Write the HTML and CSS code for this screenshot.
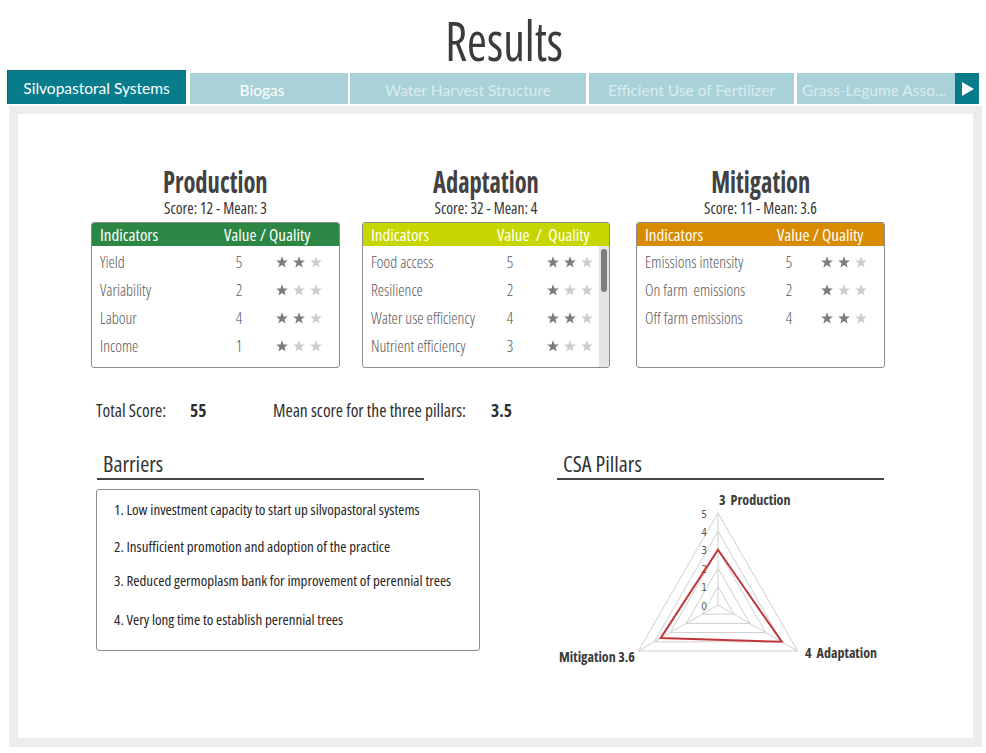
FILE: index.html
```html
<!DOCTYPE html>
<html lang="en">
<head>
<meta charset="utf-8">
<title>Results</title>
<link rel="stylesheet" href="styles.css">
</head>
<body>
<svg class="defs" width="0" height="0" aria-hidden="true">
  <defs>
    <symbol id="star" viewBox="0 0 12 12">
      <polygon points="6,0.3 7.53,4.4 11.9,4.58 8.47,7.3 9.65,11.52 6,9.1 2.35,11.52 3.53,7.3 0.1,4.58 4.47,4.4"/>
    </symbol>
  </defs>
</svg>

<h1 class="title"><span class="title-text">Results</span></h1>

<nav class="tabs">
  <div class="tab tab--active">Silvopastoral Systems</div>
  <div class="tab tab--biogas tab--hover">Biogas</div>
  <div class="tab tab--water">Water Harvest Structure</div>
  <div class="tab tab--fert">Efficient Use of Fertilizer</div>
  <div class="tab tab--grass">Grass-Legume Asso...</div>
  <div class="tab-arrow">
    <svg width="12" height="14" viewBox="0 0 12 14"><polygon points="0,0 12,7 0,14" fill="#fff"/></svg>
  </div>
</nav>

<div class="panel">
  <div class="sheet">

    <div class="pillars">
      <section class="pillar">
        <h2 class="pillar-title"><span>Production</span></h2>
        <p class="pillar-score">Score: 12 - Mean: 3</p>
        <div class="card">
          <div class="card-head card-head--prod">
            <span>Indicators</span><span class="vq">Value / Quality</span>
          </div>
          <div class="card-body">
            <div class="rows">
              <div class="row"><span class="lbl">Yield</span><span class="val">5</span><span class="stars"><svg class="on"><use href="#star"/></svg><svg class="on"><use href="#star"/></svg><svg class="off"><use href="#star"/></svg></span></div>
              <div class="row"><span class="lbl">Variability</span><span class="val">2</span><span class="stars"><svg class="on"><use href="#star"/></svg><svg class="off"><use href="#star"/></svg><svg class="off"><use href="#star"/></svg></span></div>
              <div class="row"><span class="lbl">Labour</span><span class="val">4</span><span class="stars"><svg class="on"><use href="#star"/></svg><svg class="on"><use href="#star"/></svg><svg class="off"><use href="#star"/></svg></span></div>
              <div class="row"><span class="lbl">Income</span><span class="val">1</span><span class="stars"><svg class="on"><use href="#star"/></svg><svg class="off"><use href="#star"/></svg><svg class="off"><use href="#star"/></svg></span></div>
            </div>
          </div>
        </div>
      </section>

      <section class="pillar">
        <h2 class="pillar-title"><span>Adaptation</span></h2>
        <p class="pillar-score">Score: 32 - Mean: 4</p>
        <div class="card">
          <div class="card-head card-head--adapt">
            <span>Indicators</span><span class="vq vq--wide">Value  /  Quality</span>
          </div>
          <div class="card-body">
            <div class="rows">
              <div class="row"><span class="lbl">Food access</span><span class="val">5</span><span class="stars"><svg class="on"><use href="#star"/></svg><svg class="on"><use href="#star"/></svg><svg class="off"><use href="#star"/></svg></span></div>
              <div class="row"><span class="lbl">Resilience</span><span class="val">2</span><span class="stars"><svg class="on"><use href="#star"/></svg><svg class="off"><use href="#star"/></svg><svg class="off"><use href="#star"/></svg></span></div>
              <div class="row"><span class="lbl">Water use efficiency</span><span class="val">4</span><span class="stars"><svg class="on"><use href="#star"/></svg><svg class="on"><use href="#star"/></svg><svg class="off"><use href="#star"/></svg></span></div>
              <div class="row"><span class="lbl">Nutrient efficiency</span><span class="val">3</span><span class="stars"><svg class="on"><use href="#star"/></svg><svg class="off"><use href="#star"/></svg><svg class="off"><use href="#star"/></svg></span></div>
            </div>
            <div class="scrollbar"><div class="thumb"></div></div>
          </div>
        </div>
      </section>

      <section class="pillar pillar--mit">
        <h2 class="pillar-title"><span>Mitigation</span></h2>
        <p class="pillar-score">Score: 11 - Mean: 3.6</p>
        <div class="card">
          <div class="card-head card-head--mit">
            <span>Indicators</span><span class="vq vq--mit">Value / Quality</span>
          </div>
          <div class="card-body">
            <div class="rows rows--mit">
              <div class="row"><span class="lbl">Emissions intensity</span><span class="val">5</span><span class="stars"><svg class="on"><use href="#star"/></svg><svg class="on"><use href="#star"/></svg><svg class="off"><use href="#star"/></svg></span></div>
              <div class="row"><span class="lbl">On farm  emissions</span><span class="val">2</span><span class="stars"><svg class="on"><use href="#star"/></svg><svg class="off"><use href="#star"/></svg><svg class="off"><use href="#star"/></svg></span></div>
              <div class="row"><span class="lbl">Off farm emissions</span><span class="val">4</span><span class="stars"><svg class="on"><use href="#star"/></svg><svg class="on"><use href="#star"/></svg><svg class="off"><use href="#star"/></svg></span></div>
            </div>
          </div>
        </div>
      </section>
    </div>

    <div class="totals">
      <span class="t-label">Total Score:</span>
      <span class="t-value t-value--total">55</span>
      <span class="t-label t-label--mean">Mean score for the three pillars:</span>
      <span class="t-value">3.5</span>
    </div>

    <div class="lower">
      <section class="barriers">
        <h3 class="sec-title">Barriers</h3>
        <ol class="barrier-box">
          <li>1. Low investment capacity to start up silvopastoral systems</li>
          <li>2. Insufficient promotion and adoption of the practice</li>
          <li>3. Reduced germoplasm bank for improvement of perennial trees</li>
          <li>4. Very long time to establish perennial trees</li>
        </ol>
      </section>

      <section class="csa">
        <h3 class="sec-title">CSA Pillars</h3>
        <svg class="radar" width="327" height="190" viewBox="0 0 327 190">
          <g fill="none" stroke="#cfcfcf" stroke-width="1">
            <polygon points="161,106.6 176.93,134.2 145.07,134.2"/>
            <polygon points="161,88.2 192.87,143.4 129.13,143.4"/>
            <polygon points="161,69.8 208.8,152.6 113.2,152.6"/>
            <polygon points="161,51.4 224.74,161.8 97.26,161.8"/>
            <polygon points="161,33 240.67,171 81.33,171"/>
            <line x1="161" y1="125" x2="161" y2="33"/>
            <line x1="161" y1="125" x2="240.67" y2="171"/>
            <line x1="161" y1="125" x2="81.33" y2="171"/>
          </g>
          <g class="ticks">
            <text x="147" y="37.5">5</text>
            <text x="147" y="55.5">4</text>
            <text x="147" y="74">3</text>
            <text x="147" y="92.5">2</text>
            <text x="147" y="111">1</text>
            <text x="147" y="129.5">0</text>
          </g>
          <polygon points="161,69.8 224.74,161.8 103.63,158.12" fill="none" stroke="#c0373a" stroke-width="2"/>
          <g class="axis-labels">
            <text x="162" y="25">3  Production</text>
            <text x="248" y="178">4  Adaptation</text>
            <text x="2" y="182">Mitigation 3.6</text>
          </g>
        </svg>
      </section>
    </div>

  </div>
</div>
</body>
</html>
```

FILE: styles.css
```css
* { box-sizing: border-box; }

html, body {
  margin: 0;
  padding: 0;
  background: #ffffff;
}

body {
  font-family: "Open Sans", "DejaVu Sans", sans-serif;
  font-stretch: 75%;
  color: #333;
  width: 986px;
  height: 753px;
  overflow: hidden;
}

.defs { position: absolute; width: 0; height: 0; }

/* Title */
.title {
  margin: 0;
  height: 70px;
  padding: 13px 0 0 22px;
  display: flex;
  justify-content: center;
  font-weight: normal;
}
.title-text {
  display: inline-block;
  font-size: 54px;
  line-height: 54px;
  font-weight: 400;
  color: #3b3b3b;
  transform: scaleX(0.89);
}

/* Tabs */
.tabs {
  display: flex;
  align-items: flex-end;
  height: 34px;
  padding-left: 7px;
  font-family: "Lato", "Liberation Sans", sans-serif;
  font-stretch: 100%;
  font-size: 15.5px;
}
.tab {
  height: 31px;
  background: #a9d2d8;
  color: #d8ecef;
  display: flex;
  align-items: center;
  justify-content: center;
  white-space: nowrap;
  margin-left: 3px;
  padding-top: 3px;
}
.tab--active {
  height: 34px;
  width: 179px;
  margin-left: 0;
  background: #077d8c;
  color: #fff;
  box-shadow: inset 1px 1px 0 #0d6672;
  padding-top: 2px;
}
.tab--biogas { width: 158px; margin-left: 4px; padding-right: 14px; }
.tab--water { width: 236px; margin-left: 2px; }
.tab--fert { width: 205px; }
.tab--grass { width: 158px; justify-content: flex-start; padding-left: 5px; }
.tab--hover { color: #ffffff; }
.tab-arrow {
  width: 24px;
  height: 31px;
  background: #077d8c;
  display: flex;
  align-items: center;
  justify-content: center;
  padding-left: 2px;
}

/* Panel */
.panel {
  margin: 2px 0 0 9px;
  width: 973px;
  background: #ececec;
  padding: 8px 9px 9px 9px;
}
.sheet {
  background: #fff;
  height: 624px;
  padding: 52px 0 0 73px;
}

/* Pillars */
.pillars {
  display: grid;
  grid-template-columns: 249px 248px 253px;
  column-gap: 22px;
}
.pillar--mit { padding-left: 4px; }

.pillar-title {
  margin: 0;
  text-align: center;
  font-size: 31px;
  line-height: 30px;
  height: 30px;
  font-weight: 700;
  color: #424242;
}
.pillar-title span {
  display: inline-block;
  transform: scaleX(0.79);
}
.pillar-score {
  margin: 4px 0 0;
  text-align: center;
  font-size: 15.5px;
  line-height: 16px;
  color: #333;
}

.card {
  margin-top: 6px;
  border: 1px solid #8c8c8c;
  border-radius: 3px;
  overflow: hidden;
}
.card-head {
  height: 23px;
  display: grid;
  grid-template-columns: 124px auto;
  align-items: center;
  padding-left: 8px;
  color: #fff;
  font-size: 17px;
  white-space: pre;
}
.card-head--prod { background: #2c8745; }
.card-head--adapt { background: #c6d600; }
.card-head--mit { background: #d98b00; }
.vq--wide { margin-left: 2px; }
.vq--mit { margin-left: 8px; }

.card-body {
  height: 121px;
  display: flex;
}
.rows {
  flex: 1;
  padding-top: 2px;
}
.row {
  height: 28px;
  display: grid;
  grid-template-columns: 126px 26px auto;
  align-items: center;
  padding-left: 8px;
  font-size: 16px;
  font-weight: 300;
  color: #555;
  white-space: pre;
}
.rows--mit .val { position: relative; left: 5px; }
.val { text-align: center; }
.stars {
  display: flex;
  gap: 5px;
  margin-left: 24px;
}
.stars svg {
  width: 12px;
  height: 12px;
}
.stars .on { fill: #7b7b7b; }
.stars .off { fill: #cdcdcd; }

.scrollbar {
  width: 10px;
  background: #e4e4e4;
  padding: 3px 2px 0 2px;
}
.thumb {
  height: 43px;
  background: #7e7e7e;
  border-radius: 3px;
}

/* Totals */
.totals {
  margin-top: 32px;
  padding-left: 5px;
  display: flex;
  font-size: 17.5px;
  line-height: 20px;
  color: #2e2e2e;
  white-space: nowrap;
}
.t-label { width: 94px; }
.t-value { font-weight: 700; }
.t-value--total { width: 83px; }
.t-label--mean { width: 218px; }

/* Lower */
.lower {
  margin-top: 30px;
  padding-left: 5px;
  display: grid;
  grid-template-columns: 384px 327px;
  column-gap: 77px;
}
.sec-title {
  margin: 0;
  font-size: 22px;
  line-height: 26px;
  font-weight: 400;
  color: #333;
  padding: 0 0 2px 6px;
  border-bottom: 2px solid #444;
}
.barriers .sec-title {
  width: 327px;
  margin-left: 1px;
}
.barrier-box {
  list-style: none;
  margin: 9px 0 0;
  height: 162px;
  border: 1px solid #8c8c8c;
  border-radius: 3px;
  padding: 9px 0 0 17px;
  font-size: 15px;
  color: #262626;
  white-space: nowrap;
}
.barrier-box li {
  line-height: 20px;
  height: 37px;
}
.barrier-box li:nth-child(2) { height: 34px; }
.barrier-box li:nth-child(3) { height: 39px; }

.radar { display: block; }
.ticks text {
  font-family: "DejaVu Sans", sans-serif;
  font-size: 10px;
  fill: #555;
  text-anchor: middle;
}
.axis-labels text {
  font-size: 14px;
  font-weight: 700;
  fill: #3a3a3a;
  white-space: pre;
}
```
